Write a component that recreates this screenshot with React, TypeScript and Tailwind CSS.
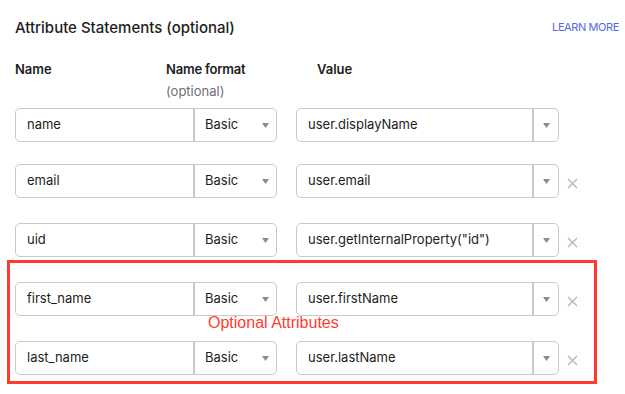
const rows = [
  { name: "name", value: "user.displayName", removable: false },
  { name: "email", value: "user.email", removable: true },
  { name: "uid", value: 'user.getInternalProperty("id")', removable: true },
];

const optionalRows = [
  { name: "first_name", value: "user.firstName" },
  { name: "last_name", value: "user.lastName" },
];

function Caret() {
  return (
    <svg width="7" height="5" viewBox="0 0 7 5" className="block">
      <path d="M0 0 H7 L3.5 5 Z" fill="#8a8a90" />
    </svg>
  );
}

function RemoveIcon() {
  return (
    <svg width="11" height="11" viewBox="0 0 11 11" className="block">
      <path d="M1 1 L10 10 M10 1 L1 10" stroke="#b3b3b8" strokeWidth="1.3" fill="none" />
    </svg>
  );
}

function AttributeRow({ name, value, removable }: { name: string; value: string; removable: boolean }) {
  return (
    <div className="flex items-center h-[34px]">
      <div className="flex h-full w-[262px] rounded-[5px] border border-[#c8c8ce] bg-white">
        <div className="flex items-center w-[179px] pl-[11px] text-[13px] text-[#1d1d21] border-r-2 border-[#c8c8ce]">
          {name}
        </div>
        <div className="flex flex-1 items-center justify-between pl-[10px] pr-[7px] text-[13px] text-[#1d1d21]">
          <span>Basic</span>
          <Caret />
        </div>
      </div>
      <div className="ml-[19px] flex h-full w-[263px] rounded-[5px] border border-[#c8c8ce] bg-white">
        <div className="flex items-center flex-1 pl-[11px] text-[13px] text-[#1d1d21] border-r-2 border-[#c8c8ce]">
          {value}
        </div>
        <div className="flex w-[24px] items-center justify-center">
          <Caret />
        </div>
      </div>
      {removable && (
        <div className="ml-[8px] mt-[4px]">
          <RemoveIcon />
        </div>
      )}
    </div>
  );
}

export default function App() {
  return (
    <div
      className="w-[625px] h-[394px] bg-white overflow-hidden"
      style={{ fontFamily: "Inter, 'Liberation Sans', sans-serif" }}
    >
      <div className="px-[15px] pt-[18px]">
        <div className="flex items-start justify-between">
          <h2 className="text-[15px] leading-[20px] font-medium text-[#1d1d21]">
            Attribute Statements (optional)
          </h2>
          <a href="#" className="mr-[-9px] mt-[-1px] text-[11px] leading-[20px] text-[#5468e6] tracking-[-0.4px]">
            LEARN MORE
          </a>
        </div>

        <div className="mt-[23px] flex text-[13px] leading-[16px]">
          <div className="w-[151px] font-semibold text-[#1d1d21]">Name</div>
          <div className="w-[151px]">
            <div className="font-semibold text-[#1d1d21] tracking-[-0.2px]">Name format</div>
            <div className="mt-[6px] text-[#6e6e78]">(optional)</div>
          </div>
          <div className="font-semibold text-[#1d1d21]">Value</div>
        </div>

        <div className="mt-[9px] flex flex-col">
          <AttributeRow {...rows[0]} />
          <div className="mt-[22px]">
            <AttributeRow {...rows[1]} />
          </div>
          <div className="mt-[25px]">
            <AttributeRow {...rows[2]} />
          </div>
        </div>

        <div className="relative mt-[3px] ml-[-8px] w-[590px] border-[3px] border-[#ff3b30] pl-[5px] pt-[19px] pb-[6px]">
          <AttributeRow name={optionalRows[0].name} value={optionalRows[0].value} removable />
          <div className="mt-[25px]">
            <AttributeRow name={optionalRows[1].name} value={optionalRows[1].value} removable />
          </div>
          <span
            className="absolute left-[198px] top-[51px] text-[16px] leading-[18px] text-[#ff3b30]"
            style={{ fontFamily: "'Liberation Sans', Arial, sans-serif" }}
          >
            Optional Attributes
          </span>
        </div>
      </div>
    </div>
  );
}
